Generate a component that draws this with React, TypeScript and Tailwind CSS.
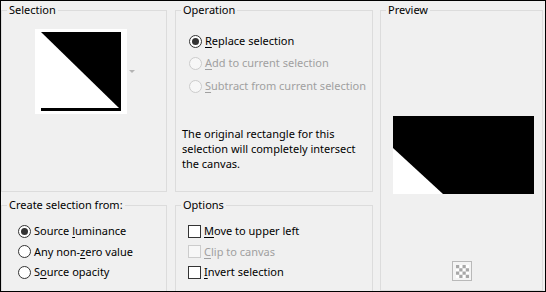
import React from 'react';

const font = { fontFamily: '"Noto Sans", "Open Sans", sans-serif' };

const Mnemonic: React.FC<{ text: string; at: number }> = ({ text, at }) => (
  <>
    {text.slice(0, at)}
    <span className="underline underline-offset-2">{text[at]}</span>
    {text.slice(at + 1)}
  </>
);

const Radio: React.FC<{ checked?: boolean; disabled?: boolean }> = ({ checked, disabled }) => (
  <span
    className={`flex h-[13px] w-[13px] shrink-0 items-center justify-center rounded-full border ${
      disabled ? 'border-[#cccccc] bg-[#f7f7f7]' : 'border-[#333333] bg-white'
    }`}
  >
    {checked && <span className="h-[7px] w-[7px] rounded-full bg-[#333333]" />}
  </span>
);

const Check: React.FC<{ disabled?: boolean }> = ({ disabled }) => (
  <span
    className={`h-[13px] w-[13px] shrink-0 border ${
      disabled ? 'border-[#cccccc] bg-[#f7f7f7]' : 'border-[#333333] bg-white'
    }`}
  />
);

const Group: React.FC<{ title: string; className?: string; children?: React.ReactNode }> = ({
  title,
  className,
  children,
}) => (
  <fieldset className={`border border-[#dcdcdc] ${className ?? ''}`}>
    <legend className="ml-[5px] px-[2px] text-[11px] leading-[16px] text-black">{title}</legend>
    {children}
  </fieldset>
);

export default function App() {
  return (
    <div
      style={font}
      className="flex h-[292px] w-[546px] overflow-hidden whitespace-nowrap border border-black bg-[#f0f0f0] text-[11px] text-black"
    >
      {/* left column */}
      <div className="flex w-[166px] shrink-0 flex-col">
        <Group title="Selection" className="mt-[1px] h-[190px] shrink-0">
          <div className="ml-[33px] mt-[11px] flex items-center">
            <div className="h-[85px] w-[92px] bg-white pl-[6px] pt-[3px]">
              <svg width="80" height="80" viewBox="0 0 80 80">
                <polygon points="0,0 80,0 80,77 79,77" fill="#000" />
                <rect x="0" y="76" width="80" height="3" fill="#000" />
              </svg>
            </div>
            <svg width="6" height="4" viewBox="0 0 6 4" className="ml-[2px]">
              <polygon points="0,0 6,0 3,3" fill="#b4b4b4" />
            </svg>
          </div>
        </Group>
        <Group title="Create selection from:" className="mt-[5px] h-[110px] shrink-0">
          <div className="flex flex-col pl-[16px] pt-[8px]">
            <label className="flex h-[20.5px] items-center gap-[3px]">
              <Radio checked />
              <span>
                Source <Mnemonic text="luminance" at={0} />
              </span>
            </label>
            <label className="flex h-[20.5px] items-center gap-[3px]">
              <Radio />
              <span>
                Any non-<Mnemonic text="zero" at={0} /> value
              </span>
            </label>
            <label className="flex h-[20.5px] items-center gap-[3px]">
              <Radio />
              <span>
                <Mnemonic text="Source" at={1} /> opacity
              </span>
            </label>
          </div>
        </Group>
      </div>

      {/* middle column */}
      <div className="ml-[8px] flex w-[198px] shrink-0 flex-col">
        <Group title="Operation" className="mt-[1px] h-[190px] shrink-0">
          <div className="flex flex-col pl-[13px] pt-[12px]">
            <label className="flex h-[22px] items-center gap-[3px]">
              <Radio checked />
              <span>
                <Mnemonic text="Replace" at={0} /> selection
              </span>
            </label>
            <label className="flex h-[23px] items-center gap-[3px] text-[#a0a0a0]">
              <Radio disabled />
              <span>
                <Mnemonic text="Add" at={0} /> to current selection
              </span>
            </label>
            <label className="flex h-[22px] items-center gap-[3px] text-[#a0a0a0]">
              <Radio disabled />
              <span>
                <Mnemonic text="Subtract" at={0} /> from current selection
              </span>
            </label>
          </div>
          <p className="mt-[29px] pl-[6px] leading-[15px]">
            The original rectangle for this
            <br />
            selection will completely intersect
            <br />
            the canvas.
          </p>
        </Group>
        <Group title="Options" className="mt-[5px] h-[110px] shrink-0">
          <div className="flex flex-col pl-[12px] pt-[8px]">
            <label className="flex h-[20.5px] items-center gap-[3px]">
              <Check />
              <span>
                <Mnemonic text="Move" at={0} /> to upper left
              </span>
            </label>
            <label className="flex h-[20.5px] items-center gap-[3px] text-[#a0a0a0]">
              <Check disabled />
              <span>
                <Mnemonic text="Clip" at={0} /> to canvas
              </span>
            </label>
            <label className="flex h-[20.5px] items-center gap-[3px]">
              <Check />
              <span>
                <Mnemonic text="Invert" at={0} /> selection
              </span>
            </label>
          </div>
        </Group>
      </div>

      {/* preview */}
      <Group title="Preview" className="ml-[7px] mt-[1px] h-[289px] w-[163px] shrink-0">
        <div className="flex flex-col items-start pl-[12px] pt-[98px]">
          <svg width="141" height="78" viewBox="0 0 141 78">
            <rect width="141" height="78" fill="#000" />
            <polygon points="0,32 0,78 50,78" fill="#fff" />
          </svg>
          <div className="ml-[59px] mt-[67px] flex h-[20px] w-[20px] items-center justify-center border border-[#b9b9b9] bg-[#f4f4f4]">
            <svg width="13" height="13" viewBox="0 0 12 12">
              <rect width="12" height="12" fill="#fff" />
              <rect x="0" y="0" width="3" height="3" fill="#a8a8a8" />
              <rect x="6" y="0" width="3" height="3" fill="#a8a8a8" />
              <rect x="3" y="3" width="3" height="3" fill="#a8a8a8" />
              <rect x="9" y="3" width="3" height="3" fill="#a8a8a8" />
              <rect x="0" y="6" width="3" height="3" fill="#a8a8a8" />
              <rect x="6" y="6" width="3" height="3" fill="#a8a8a8" />
              <rect x="3" y="9" width="3" height="3" fill="#a8a8a8" />
              <rect x="9" y="9" width="3" height="3" fill="#a8a8a8" />
            </svg>
          </div>
        </div>
      </Group>
    </div>
  );
}
